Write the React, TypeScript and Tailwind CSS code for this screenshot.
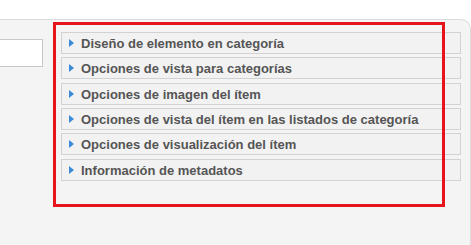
import React from "react";

const items: [string, string][] = [
  ["Diseño de elemento en categoría", "mt-0"],
  ["Opciones de vista para categorías", "mt-[3px]"],
  ["Opciones de imagen del ítem", "mt-[4px]"],
  ["Opciones de vista del ítem en las listados de categoría", "mt-[3px]"],
  ["Opciones de visualización del ítem", "mt-[3px]"],
  ["Información de metadatos", "mt-[4px]"],
];

export default function App() {
  return (
    <div className="relative w-[471px] h-[245px] overflow-hidden bg-white" style={{ fontFamily: '"Liberation Sans", Arial, sans-serif' }}>
      <div className="h-[19px] bg-white" />
      <div className="h-[226px] w-[471px] bg-[#f4f4f4] border-t border-r border-[#dcdcdc] rounded-tr-[10px] flex">
        <div className="w-[61px] shrink-0 pt-[19px]">
          <div className="h-[28px] w-[43px] bg-white border border-l-0 border-[#c8c8c8]" />
        </div>
        <div className="w-[400px] pt-[12px] flex flex-col">
          {items.map(([t, m]) => (
            <div key={t} className={`${m} h-[22px] border border-[#d2d2d2] bg-[#f2f2f2] flex items-center pl-[7px]`}>
              <svg width="5" height="8" viewBox="0 0 5 8" className="mr-[7px] shrink-0">
                <path d="M0 0 L5 4 L0 8 Z" fill="#3a8ad8" />
              </svg>
              <span className="text-[13px] font-bold text-[#555555] leading-none">{t}</span>
            </div>
          ))}
        </div>
      </div>
      <div className="absolute left-[53px] top-[22px] w-[392px] h-[185px] border-[3px] border-[#e8141b] pointer-events-none" />
    </div>
  );
}
